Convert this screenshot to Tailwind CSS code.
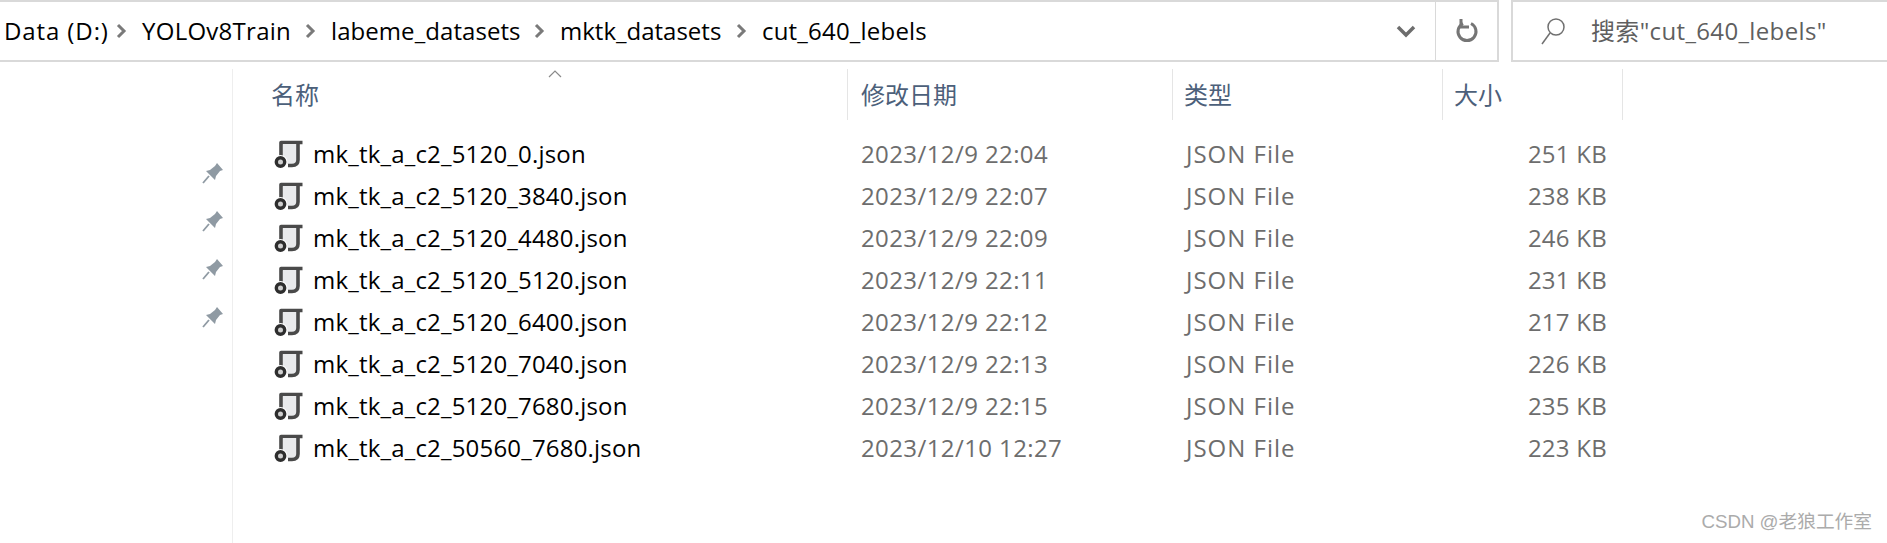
<!DOCTYPE html>
<html lang="zh">
<head>
  <meta charset="UTF-8">
  <title>cut_640_lebels</title>
  <script src="https://cdn.jsdelivr.net/npm/@tailwindcss/browser@4"></script>
</head>
<body class="bg-white text-black font-['Open_Sans','Noto_Sans_CJK_SC',sans-serif] w-[1887px] h-[543px] overflow-hidden relative">
  <!-- toolbar -->
  <div class="flex h-[62px] items-stretch">
    <div class="w-[1499px] flex items-center border-y-2 border-r-2 border-[#d9d9d9]">
      <div class="flex items-center flex-1 text-[24px] pl-1">
        <span class="w-[111px] tracking-[0.9px]">Data (D:)</span>
        <svg class="w-[12px] h-[18px] mr-[15px]" viewBox="0 0 12 18"><path d="M3 3l6 6-6 6" fill="none" stroke="#7a7a7a" stroke-width="3"/></svg>
        <span class="w-[162px] tracking-[0.27px]">YOLOv8Train</span>
        <svg class="w-[12px] h-[18px] mr-[15px]" viewBox="0 0 12 18"><path d="M3 3l6 6-6 6" fill="none" stroke="#7a7a7a" stroke-width="3"/></svg>
        <span class="w-[202px] tracking-[0.07px]">labeme_datasets</span>
        <svg class="w-[12px] h-[18px] mr-[15px]" viewBox="0 0 12 18"><path d="M3 3l6 6-6 6" fill="none" stroke="#7a7a7a" stroke-width="3"/></svg>
        <span class="w-[175px]">mktk_datasets</span>
        <svg class="w-[12px] h-[18px] mr-[15px]" viewBox="0 0 12 18"><path d="M3 3l6 6-6 6" fill="none" stroke="#7a7a7a" stroke-width="3"/></svg>
        <span class="tracking-[0.2px]">cut_640_lebels</span>
      </div>
      <svg class="w-[20px] h-[14px] mr-[19px]" viewBox="0 0 20 14"><path d="M2 3l8 8 8-8" fill="none" stroke="#6d6d6d" stroke-width="3.5"/></svg>
      <div class="w-[62px] self-stretch border-l border-[#d9d9d9] flex items-center justify-center">
        <svg class="w-[24px] h-[28px]" viewBox="0 0 24 28"><path d="M8 6.5a9 9 0 1 0 8 0" fill="none" stroke="#757575" stroke-width="3"/><path d="M6 2v8h8" fill="none" stroke="#757575" stroke-width="3"/></svg>
      </div>
    </div>
    <div class="ml-[12px] flex-1 flex items-center border-y-2 border-l-2 border-[#d9d9d9] pl-[27px]">
      <svg class="w-[26px] h-[28px] mr-[25px]" viewBox="0 0 26 28"><circle cx="16" cy="10" r="8" fill="none" stroke="#707070" stroke-width="1.5"/><path d="M10 16L2 27" stroke="#707070" stroke-width="1.5"/></svg>
      <span class="text-[24px] tracking-[0.35px] text-[#5f5f5f]">搜索"cut_640_lebels"</span>
    </div>
  </div>

  <div class="flex mt-[7px]">
    <!-- nav pane -->
    <div class="w-[233px] h-[474px] border-r border-[#eeeeee] flex flex-col items-end pr-[9px] pt-[94px] gap-[27px]">
      <svg class="w-[21px] h-[21px]" viewBox="0 0 21 21"><use href="#pin"/></svg>
      <svg class="w-[21px] h-[21px]" viewBox="0 0 21 21"><use href="#pin"/></svg>
      <svg class="w-[21px] h-[21px]" viewBox="0 0 21 21"><use href="#pin"/></svg>
      <svg class="w-[21px] h-[21px]" viewBox="0 0 21 21"><use href="#pin"/></svg>
    </div>

    <!-- file list -->
    <div class="flex-1 relative">
      <div class="flex h-[51px] text-[24px] text-[#4c607a] items-center">
        <div class="w-[615px] h-full border-r border-[#e5e5e5] pl-[38px] flex items-center">名称</div>
        <div class="w-[325px] h-full border-r border-[#e5e5e5] pl-[13px] flex items-center">修改日期</div>
        <div class="w-[270px] h-full border-r border-[#e5e5e5] pl-[11px] flex items-center">类型</div>
        <div class="w-[180px] h-full border-r border-[#e5e5e5] pl-[11px] flex items-center">大小</div>
      </div>
      <svg class="absolute left-[314px] top-[0px] w-[16px] h-[9px]" viewBox="0 0 16 9"><path d="M2 8l6-6 6 6" fill="none" stroke="#8a8a8a" stroke-width="1.2"/></svg>

      <div class="mt-[13px] text-[24px]">
        <div class="flex items-center h-[42px]"><span class="w-[80px] pl-[40px] flex"><svg class="w-[30px] h-[30px]" viewBox="0 0 30 30"><use href="#script"/></svg></span><span class="w-[548px] tracking-[0.19px]">mk_tk_a_c2_5120_0.json</span><span class="w-[325px] tracking-[0.4px] text-[#6d6d6d]">2023/12/9 22:04</span><span class="w-[269px] tracking-[1px] text-[#6d6d6d]">JSON File</span><span class="w-[152px] text-right tracking-[0.25px] text-[#6d6d6d]">251 KB</span></div>
        <div class="flex items-center h-[42px]"><span class="w-[80px] pl-[40px] flex"><svg class="w-[30px] h-[30px]" viewBox="0 0 30 30"><use href="#script"/></svg></span><span class="w-[548px] tracking-[0.19px]">mk_tk_a_c2_5120_3840.json</span><span class="w-[325px] tracking-[0.4px] text-[#6d6d6d]">2023/12/9 22:07</span><span class="w-[269px] tracking-[1px] text-[#6d6d6d]">JSON File</span><span class="w-[152px] text-right tracking-[0.25px] text-[#6d6d6d]">238 KB</span></div>
        <div class="flex items-center h-[42px]"><span class="w-[80px] pl-[40px] flex"><svg class="w-[30px] h-[30px]" viewBox="0 0 30 30"><use href="#script"/></svg></span><span class="w-[548px] tracking-[0.19px]">mk_tk_a_c2_5120_4480.json</span><span class="w-[325px] tracking-[0.4px] text-[#6d6d6d]">2023/12/9 22:09</span><span class="w-[269px] tracking-[1px] text-[#6d6d6d]">JSON File</span><span class="w-[152px] text-right tracking-[0.25px] text-[#6d6d6d]">246 KB</span></div>
        <div class="flex items-center h-[42px]"><span class="w-[80px] pl-[40px] flex"><svg class="w-[30px] h-[30px]" viewBox="0 0 30 30"><use href="#script"/></svg></span><span class="w-[548px] tracking-[0.19px]">mk_tk_a_c2_5120_5120.json</span><span class="w-[325px] tracking-[0.4px] text-[#6d6d6d]">2023/12/9 22:11</span><span class="w-[269px] tracking-[1px] text-[#6d6d6d]">JSON File</span><span class="w-[152px] text-right tracking-[0.25px] text-[#6d6d6d]">231 KB</span></div>
        <div class="flex items-center h-[42px]"><span class="w-[80px] pl-[40px] flex"><svg class="w-[30px] h-[30px]" viewBox="0 0 30 30"><use href="#script"/></svg></span><span class="w-[548px] tracking-[0.19px]">mk_tk_a_c2_5120_6400.json</span><span class="w-[325px] tracking-[0.4px] text-[#6d6d6d]">2023/12/9 22:12</span><span class="w-[269px] tracking-[1px] text-[#6d6d6d]">JSON File</span><span class="w-[152px] text-right tracking-[0.25px] text-[#6d6d6d]">217 KB</span></div>
        <div class="flex items-center h-[42px]"><span class="w-[80px] pl-[40px] flex"><svg class="w-[30px] h-[30px]" viewBox="0 0 30 30"><use href="#script"/></svg></span><span class="w-[548px] tracking-[0.19px]">mk_tk_a_c2_5120_7040.json</span><span class="w-[325px] tracking-[0.4px] text-[#6d6d6d]">2023/12/9 22:13</span><span class="w-[269px] tracking-[1px] text-[#6d6d6d]">JSON File</span><span class="w-[152px] text-right tracking-[0.25px] text-[#6d6d6d]">226 KB</span></div>
        <div class="flex items-center h-[42px]"><span class="w-[80px] pl-[40px] flex"><svg class="w-[30px] h-[30px]" viewBox="0 0 30 30"><use href="#script"/></svg></span><span class="w-[548px] tracking-[0.19px]">mk_tk_a_c2_5120_7680.json</span><span class="w-[325px] tracking-[0.4px] text-[#6d6d6d]">2023/12/9 22:15</span><span class="w-[269px] tracking-[1px] text-[#6d6d6d]">JSON File</span><span class="w-[152px] text-right tracking-[0.25px] text-[#6d6d6d]">235 KB</span></div>
        <div class="flex items-center h-[42px]"><span class="w-[80px] pl-[40px] flex"><svg class="w-[30px] h-[30px]" viewBox="0 0 30 30"><use href="#script"/></svg></span><span class="w-[548px] tracking-[0.19px]">mk_tk_a_c2_50560_7680.json</span><span class="w-[325px] tracking-[0.4px] text-[#6d6d6d]">2023/12/10 12:27</span><span class="w-[269px] tracking-[1px] text-[#6d6d6d]">JSON File</span><span class="w-[152px] text-right tracking-[0.25px] text-[#6d6d6d]">223 KB</span></div>
      </div>
    </div>
  </div>

  <!-- watermark -->
  <div class="absolute right-[15px] bottom-[7px] text-[18.7px] text-[#ababab] font-['Liberation_Sans','Noto_Sans_CJK_SC',sans-serif]">CSDN @老狼工作室</div>

  <svg class="hidden">
    <symbol id="script" viewBox="0 0 30 30">
      <path d="M8 18V3.5H29.5" fill="none" stroke="#4a4a4a" stroke-width="3.6" stroke-linejoin="round"/>
      <path d="M10 5H24V25H10z" fill="#e9eaec"/>
      <path d="M25 3.5V21Q25 26.5 19 26.5H15" fill="none" stroke="#4a4a4a" stroke-width="3.6"/>
      <circle cx="7.5" cy="23" r="7" fill="#fff"/>
      <circle cx="7.5" cy="23" r="4.2" fill="#cfcfcf" stroke="#2e2e2e" stroke-width="3.4"/>
    </symbol>
    <symbol id="pin" viewBox="0 0 21 21">
      <path d="M15 0L21 7L18 8L14 13L13 17L4 8L8 7L13 3Z" fill="#8f9aa3"/>
      <path d="M7 13L1 20" stroke="#8f9aa3" stroke-width="1.8"/>
    </symbol>
  </svg>
</body>
</html>
